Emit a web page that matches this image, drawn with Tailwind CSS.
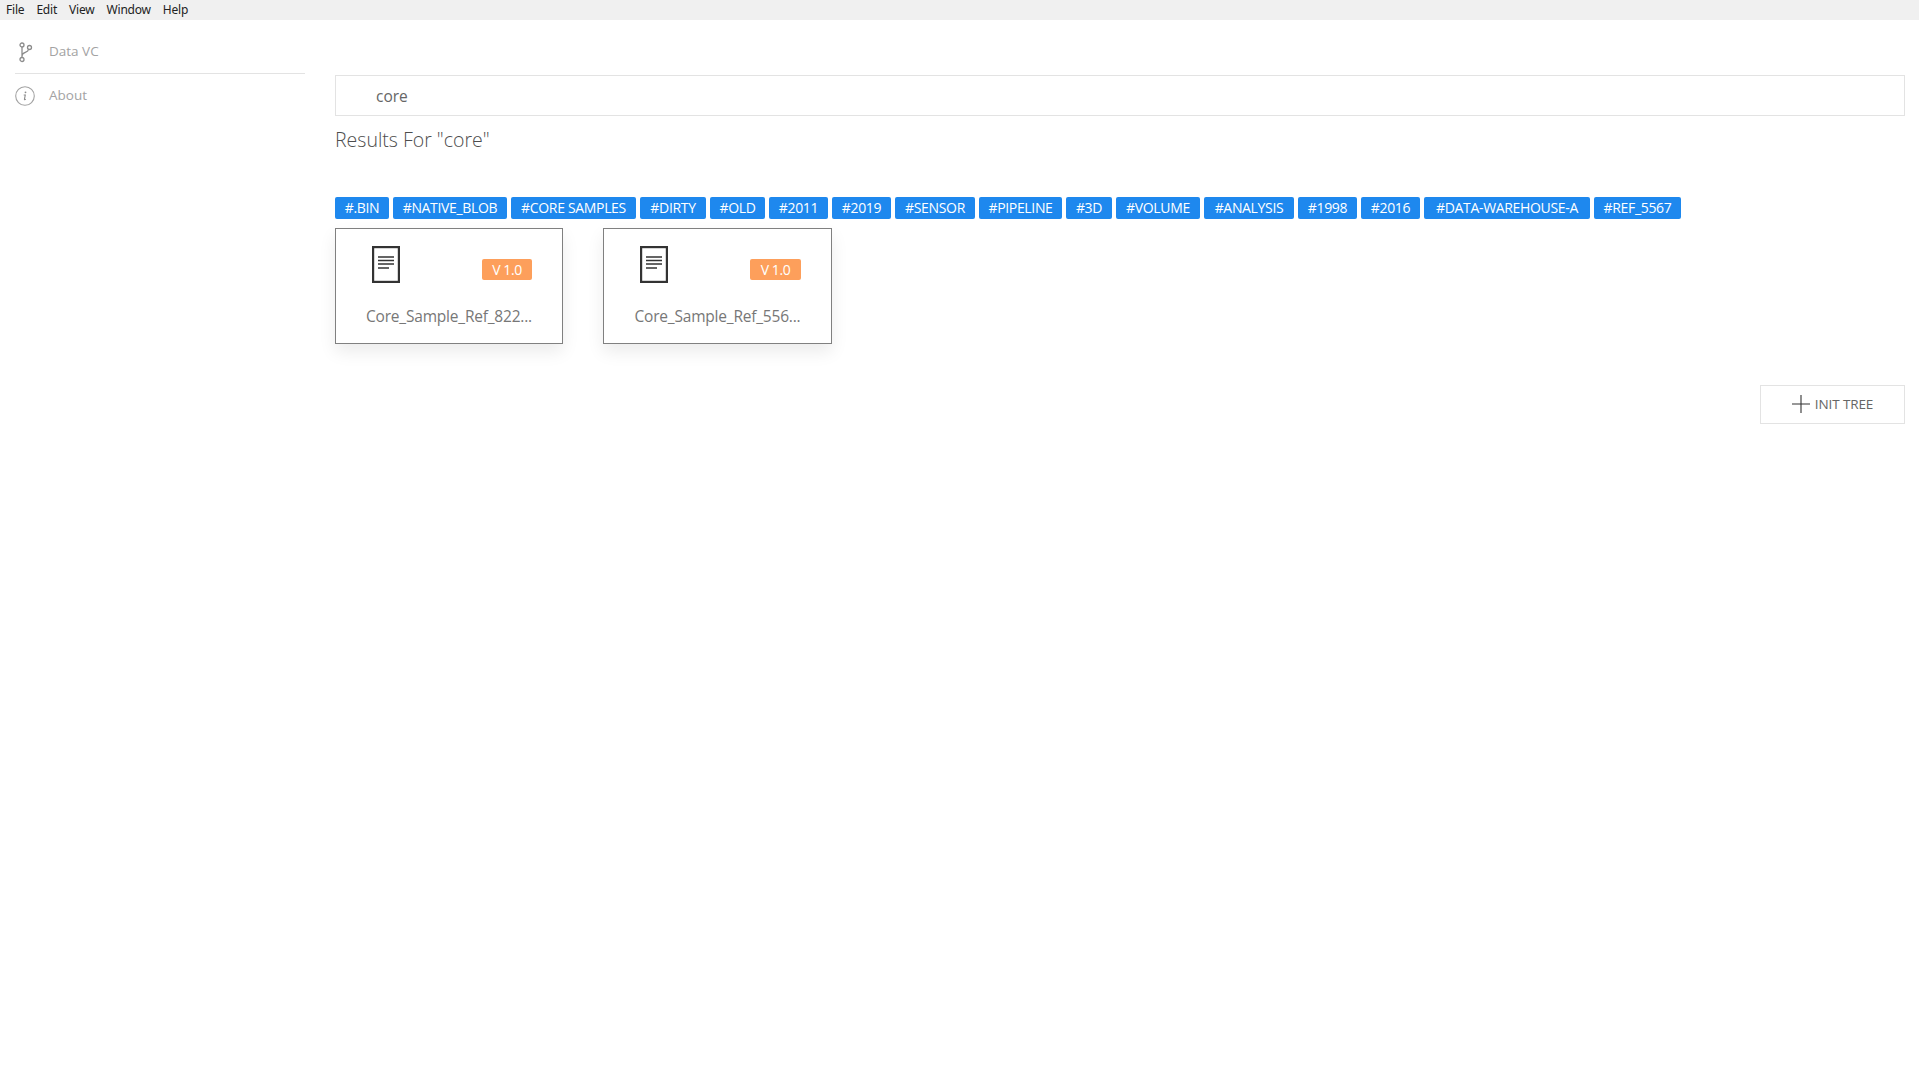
<!DOCTYPE html>
<html><head><meta charset="utf-8"><script src="https://cdn.jsdelivr.net/npm/@tailwindcss/browser@4"></script></head>
<body class="bg-white font-['Open_Sans','Noto_Sans',sans-serif] overflow-hidden">
<div class="w-[1919px] h-[1079px] flex flex-col">
  <nav class="h-5 bg-[#f0f0f0] flex items-center pl-[6px] gap-[12px] text-[12px] text-[#222] font-['Noto_Sans',sans-serif] tracking-[-0.2px]">
    <span>File</span><span>Edit</span><span>View</span><span>Window</span><span>Help</span>
  </nav>
  <div class="flex flex-1">
    <aside class="w-[335px] shrink-0 pl-[15px] pr-[30px] text-[13.5px] text-[#a3a3a3]">
      <div class="h-[54px] pt-[9px] flex items-center border-b border-[#e3e3e3] gap-[16px] pl-[3px]">
        <svg class="w-[15px] h-[21px] mt-[2px]" viewBox="0 0 15 21" fill="none" stroke="#8c8c8c" stroke-width="1.3"><circle cx="4" cy="3" r="2"/><circle cx="4" cy="17.500" r="2"/><circle cx="11.500" cy="5.500" r="2"/><path d="M4 5v10.500M4 14c0-4 6-3 6.500-6.500"/></svg>
        <span>Data VC</span>
      </div>
      <div class="h-[43px] flex items-center gap-[14px]">
        <svg class="w-[20px] h-[20px]" viewBox="0 0 20 20" fill="none"><circle cx="10" cy="10" r="9.300" stroke="#a3a3a3" stroke-width="1.100"/><path d="M8.700 9h1.600l-.9 4.300c0 .4.500.5 1.400-.2" stroke="#8c8c8c" stroke-width="1.100"/><circle cx="10.500" cy="6.300" r=".9" fill="#8c8c8c"/></svg>
        <span>About</span>
      </div>
    </aside>
    <main class="flex-1 pr-[14px] pt-[55px]">
      <div class="h-[41px] border border-[#e3e3e3] flex items-center pl-[40px] pt-[2px] text-[15.5px] text-[#666]">core</div>
      <h1 class="mt-[9px] text-[19.5px] leading-[30px] text-[#4d4d4d] font-light">Results For "core"</h1>
      <div class="mt-[42px] flex gap-[4px] text-[14px] leading-[21.500px] text-white text-center whitespace-nowrap tracking-[-0.33px]">
        <span class="w-[54px] rounded-[2px] bg-[#1e88ee]">#.BIN</span>
        <span class="w-[114px] rounded-[2px] bg-[#1e88ee]">#NATIVE_BLOB</span>
        <span class="w-[125px] rounded-[2px] bg-[#1e88ee]">#CORE SAMPLES</span>
        <span class="w-[66px] rounded-[2px] bg-[#1e88ee]">#DIRTY</span>
        <span class="w-[55px] rounded-[2px] bg-[#1e88ee]">#OLD</span>
        <span class="w-[59px] rounded-[2px] bg-[#1e88ee]">#2011</span>
        <span class="w-[59px] rounded-[2px] bg-[#1e88ee]">#2019</span>
        <span class="w-[80px] rounded-[2px] bg-[#1e88ee]">#SENSOR</span>
        <span class="w-[83px] rounded-[2px] bg-[#1e88ee]">#PIPELINE</span>
        <span class="w-[46px] rounded-[2px] bg-[#1e88ee]">#3D</span>
        <span class="w-[84px] rounded-[2px] bg-[#1e88ee]">#VOLUME</span>
        <span class="w-[90px] rounded-[2px] bg-[#1e88ee]">#ANALYSIS</span>
        <span class="w-[59px] rounded-[2px] bg-[#1e88ee]">#1998</span>
        <span class="w-[59px] rounded-[2px] bg-[#1e88ee]">#2016</span>
        <span class="w-[166px] rounded-[2px] bg-[#1e88ee]">#DATA-WAREHOUSE-A</span>
        <span class="w-[87px] rounded-[2px] bg-[#1e88ee]">#REF_5567</span>
      </div>
      <div class="mt-[9px] flex gap-[40px]">
        <div class="w-[228px] h-[116px] border border-[#808080] shadow-[0_8px_16px_rgba(0,0,0,0.08)] pl-[36px] pr-[30px] pt-[17px] flex flex-col">
          <div class="flex items-start justify-between">
            <svg class="w-[28px] h-[37px]" viewBox="0 0 28 37" fill="none" stroke="#333" stroke-width="2.200"><rect x="1.100" y="1.100" width="25.800" height="34.800"/><path d="M6 11h16M6 14.500h16M6 18h16M6 22h11" stroke-width="1.600"/></svg>
            <span class="mt-[13px] w-[50px] h-[21px] rounded-[2px] bg-[#fd9f5b] text-white text-[14px] leading-[21px] text-center tracking-[-0.4px]">V 1.0</span>
          </div>
          <div class="mt-[22px] -ml-[36px] -mr-[30px] text-center text-[15.500px] leading-[22px] text-[#777] tracking-[-0.2px] whitespace-nowrap">Core_Sample_Ref_822...</div>
        </div>
        <div class="w-[229px] h-[116px] border border-[#808080] shadow-[0_8px_16px_rgba(0,0,0,0.08)] pl-[36px] pr-[30px] pt-[17px] flex flex-col">
          <div class="flex items-start justify-between">
            <svg class="w-[28px] h-[37px]" viewBox="0 0 28 37" fill="none" stroke="#333" stroke-width="2.200"><rect x="1.100" y="1.100" width="25.800" height="34.800"/><path d="M6 11h16M6 14.500h16M6 18h16M6 22h11" stroke-width="1.600"/></svg>
            <span class="mt-[13px] w-[51px] h-[21px] rounded-[2px] bg-[#fd9f5b] text-white text-[14px] leading-[21px] text-center tracking-[-0.4px]">V 1.0</span>
          </div>
          <div class="mt-[22px] -ml-[36px] -mr-[30px] text-center text-[15.500px] leading-[22px] text-[#777] tracking-[-0.2px] whitespace-nowrap">Core_Sample_Ref_556...</div>
        </div>
      </div>
      <div class="mt-[41px] flex justify-end">
        <button class="w-[145px] h-[39px] border border-[#e3e3e3] flex items-center justify-center gap-[5px] text-[13.500px] text-[#666] tracking-[-0.1px]">
          <svg class="w-[18px] h-[18px]" viewBox="0 0 18 18" stroke="#333" stroke-width="1.100"><path d="M0 9h18M9 0v18"/></svg>
          INIT TREE
        </button>
      </div>
    </main>
  </div>
</div>
</body></html>
